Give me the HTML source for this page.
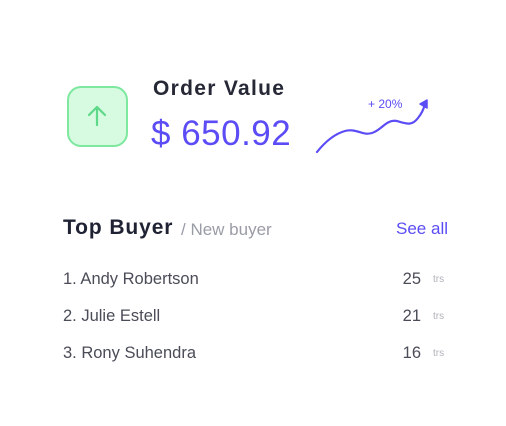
<html><head><style>
body{margin:0;width:506px;height:426px;background:#fff;font-family:"Liberation Sans",sans-serif;position:relative;overflow:hidden}
.a{position:absolute;white-space:nowrap}
</style></head><body>
<div class="a" style="left:67px;top:86px;width:57px;height:57px;border:2px solid #7ee89f;background:#d6fbe0;border-radius:14px"></div>
<svg class="a" style="left:86px;top:104px" width="22" height="24" viewBox="0 0 22 24"><path d="M11 21V3M3 11l8-8 8 8" fill="none" stroke="#5ed889" stroke-width="2.2" stroke-linecap="round" stroke-linejoin="round"/></svg>
<div class="a" style="left:153px;top:77px;font-size:21px;font-weight:bold;color:#262836;letter-spacing:1.3px">Order Value</div>
<div class="a" style="left:151px;top:114px;font-size:35px;color:#5b4cf5;letter-spacing:0.5px">$ 650.92</div>
<div class="a" style="left:368px;top:97px;font-size:12px;color:#5b4cf5">+ 20%</div>
<svg class="a" style="left:310px;top:95px" width="125" height="65" viewBox="310 95 125 65"><path d="M317 152C325 142 334 134 345 131C357 128 362 136 372 133C382 130 386 119 397 121C407 124 412 126 418 118C422 113 424 108 425 104" fill="none" stroke="#5b4cf5" stroke-width="2.2" stroke-linecap="round"/><path d="M420 104l7-4 0 8z" fill="#5b4cf5" stroke="#5b4cf5" stroke-width="1.5" stroke-linejoin="round"/></svg>
<div class="a" style="left:63px;top:216px;font-size:21px;font-weight:bold;color:#1e2233;letter-spacing:0.9px">Top Buyer</div>
<div class="a" style="left:181px;top:220px;font-size:17px;color:#9a9ca6">/ New buyer</div>
<div class="a" style="right:58px;top:219px;font-size:17px;color:#5b4cf5">See all</div>
<div class="a" style="left:63px;top:270px;font-size:16.5px;color:#4a4c57">1. Andy Robertson</div>
<div class="a" style="left:63px;top:307px;font-size:16.5px;color:#4a4c57">2. Julie Estell</div>
<div class="a" style="left:63px;top:344px;font-size:16.5px;color:#4a4c57">3. Rony Suhendra</div>
<div class="a" style="right:85px;top:270px;font-size:16.5px;color:#4a4c57">25</div>
<div class="a" style="right:85px;top:307px;font-size:16.5px;color:#4a4c57">21</div>
<div class="a" style="right:85px;top:344px;font-size:16.5px;color:#4a4c57">16</div>
<div class="a" style="left:433px;top:274px;font-size:10px;color:#b0b2ba">trs</div>
<div class="a" style="left:433px;top:311px;font-size:10px;color:#b0b2ba">trs</div>
<div class="a" style="left:433px;top:348px;font-size:10px;color:#b0b2ba">trs</div>
</body></html>
